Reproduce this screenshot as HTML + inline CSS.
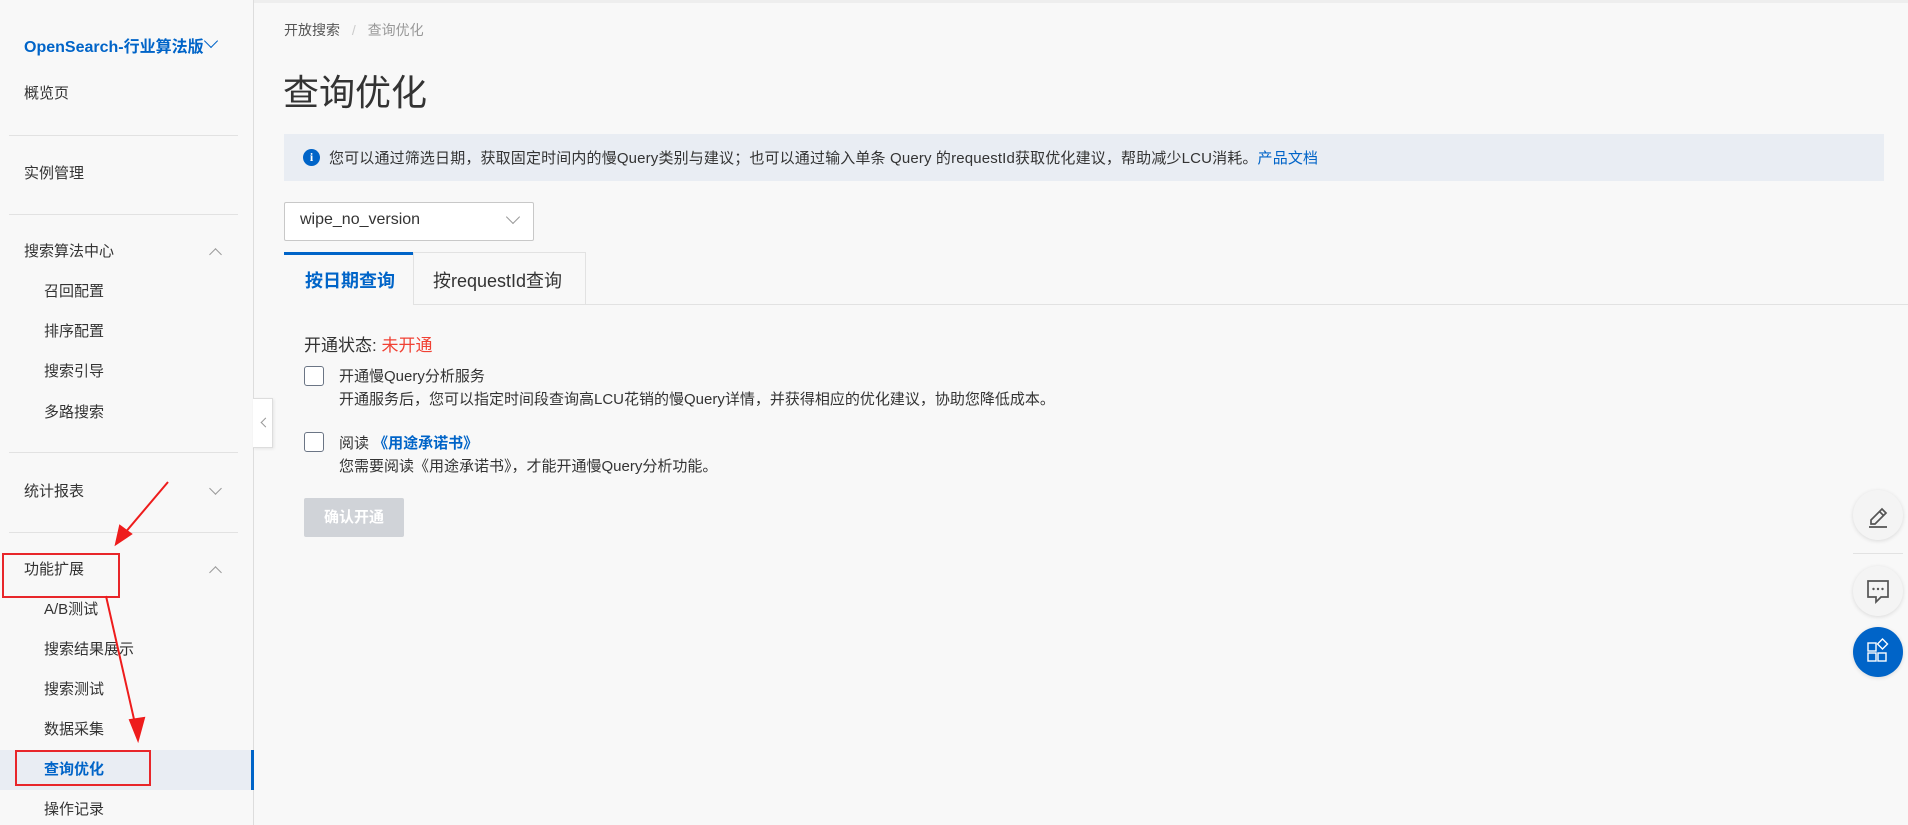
<!DOCTYPE html>
<html><head><meta charset="utf-8"><style>
*{margin:0;padding:0;box-sizing:border-box}
body{width:1908px;height:825px;overflow:hidden;background:#f8f8f8;font-family:"Liberation Sans","Noto Sans CJK SC",sans-serif;color:#333;position:relative}
.a{position:absolute;white-space:nowrap}
.side{position:absolute;left:0;top:0;width:254px;height:825px;border-right:1px solid #ddd;background:#f8f8f8}
.si{font-size:15px;color:#333;line-height:20px}
.hr{position:absolute;left:9px;width:229px;height:1px;background:#e2e2e2}
.chev{position:absolute;width:9px;height:9px;border-left:1.5px solid #999;border-top:1.5px solid #999}
.cb{position:absolute;width:20px;height:20px;border:1.5px solid #6b7585;border-radius:3px;background:#fff}
.fb{position:absolute;width:50px;height:50px;border-radius:50%;background:#f4f4f4;box-shadow:0 1px 4px rgba(0,0,0,.12)}
</style></head><body>
<div class="a" style="left:0;top:0;width:1908px;height:3px;background:#eee"></div>
<div class="a" style="left:0;top:0;width:57px;height:2px;background:#ff6a00"></div>
<div class="side">
<div class="a" style="left:24px;top:33px;font-size:16px;font-weight:bold;color:#0064c8">OpenSearch-行业算法版</div>
<div class="chev" style="left:206px;top:36px;transform:rotate(-135deg);border-color:#0064c8;width:10px;height:10px"></div>
<div class="a si" style="left:24px;top:84px">概览页</div>
<div class="hr" style="top:135px"></div>
<div class="a si" style="left:24px;top:164px">实例管理</div>
<div class="hr" style="top:214px"></div>
<div class="a si" style="left:24px;top:242px">搜索算法中心</div>
<div class="chev" style="left:211px;top:250px;transform:rotate(45deg)"></div>
<div class="a si" style="left:44px;top:282px">召回配置</div>
<div class="a si" style="left:44px;top:322px">排序配置</div>
<div class="a si" style="left:44px;top:362px">搜索引导</div>
<div class="a si" style="left:44px;top:403px">多路搜索</div>
<div class="hr" style="top:452px"></div>
<div class="a si" style="left:24px;top:482px">统计报表</div>
<div class="chev" style="left:211px;top:484px;transform:rotate(-135deg)"></div>
<div class="hr" style="top:532px"></div>
<div class="a si" style="left:24px;top:560px">功能扩展</div>
<div class="chev" style="left:211px;top:568px;transform:rotate(45deg)"></div>
<div class="a si" style="left:44px;top:600px">A/B测试</div>
<div class="a si" style="left:44px;top:640px">搜索结果展示</div>
<div class="a si" style="left:44px;top:680px">搜索测试</div>
<div class="a si" style="left:44px;top:720px">数据采集</div>
<div class="a" style="left:0;top:750px;width:254px;height:40px;background:#e9edf3;border-right:3px solid #0064c8"></div>
<div class="a si" style="left:44px;top:760px;color:#0064c8;font-weight:bold">查询优化</div>
<div class="a si" style="left:44px;top:800px">操作记录</div>
</div>
<div class="a" style="left:2px;top:553px;width:118px;height:45px;border:2px solid #e8262a"></div>
<div class="a" style="left:15px;top:750px;width:136px;height:36px;border:2px solid #e8262a"></div>
<svg class="a" style="left:0;top:0" width="260" height="825">
<g stroke="#ee1c1c" stroke-width="2" fill="#ee1c1c">
<line x1="168" y1="482" x2="124" y2="534"/><polygon points="116,544 120,526 131,534"/>
<line x1="106" y1="596" x2="136" y2="728"/><polygon points="138,740 130,720 144,718"/>
</g></svg>
<div class="a" style="left:253px;top:398px;width:20px;height:50px;background:#fff;border:1px solid #ddd;border-left:none;box-shadow:1px 1px 3px rgba(0,0,0,.08)"></div>
<div class="chev" style="left:262px;top:419px;transform:rotate(-45deg);width:7px;height:7px"></div>
<div class="a" style="left:284px;top:20px;font-size:14px;color:#555">开放搜索 <span style="color:#ccc;margin:0 8px">/</span> <span style="color:#999">查询优化</span></div>
<div class="a" style="left:283px;top:64px;font-size:36px;color:#333">查询优化</div>
<div class="a" style="left:284px;top:134px;width:1600px;height:47px;background:#e9edf3"></div>
<div class="a" style="left:303px;top:149px;width:17px;height:17px;border-radius:50%;background:#0064c8;color:#fff;font-size:12px;font-weight:bold;text-align:center;line-height:17px;font-family:'Liberation Serif',serif">i</div>
<div class="a" style="left:329px;top:147px;font-size:15px;color:#333;letter-spacing:0.15px">您可以通过筛选日期，获取固定时间内的慢Query类别与建议；也可以通过输入单条 Query 的requestId获取优化建议，帮助减少LCU消耗。<span style="color:#0064c8">产品文档</span></div>
<div class="a" style="left:284px;top:202px;width:250px;height:39px;background:#fff;border:1px solid #c8c8c8;border-radius:2px"></div>
<div class="a" style="left:300px;top:211px;font-size:16px;color:#333">wipe_no_version</div>
<div class="chev" style="left:508px;top:212px;transform:rotate(-135deg);width:10px;height:10px"></div>
<div class="a" style="left:284px;top:304px;width:1624px;height:1px;background:#e2e2e2"></div>
<div class="a" style="left:284px;top:252px;width:129px;height:53px;background:#f8f8f8;border-top:3px solid #0064c8"></div>
<div class="a" style="left:305px;top:267px;font-size:18px;font-weight:bold;color:#0064c8">按日期查询</div>
<div class="a" style="left:413px;top:252px;width:173px;height:52px;border:1px solid #e2e2e2;border-bottom:none;background:#f8f8f8"></div>
<div class="a" style="left:433px;top:267px;font-size:18px;color:#333">按requestId查询</div>
<div class="a" style="left:304px;top:331px;font-size:17px;color:#333">开通状态: <span style="color:#f04134">未开通</span></div>
<div class="cb" style="left:304px;top:366px"></div>
<div class="a" style="left:339px;top:365px;font-size:15px">开通慢Query分析服务</div>
<div class="a" style="left:339px;top:388px;font-size:15px">开通服务后，您可以指定时间段查询高LCU花销的慢Query详情，并获得相应的优化建议，协助您降低成本。</div>
<div class="cb" style="left:304px;top:432px"></div>
<div class="a" style="left:339px;top:432px;font-size:15px">阅读 <span style="color:#0064c8;font-weight:bold">《用途承诺书》</span></div>
<div class="a" style="left:339px;top:455px;font-size:15px">您需要阅读《用途承诺书》，才能开通慢Query分析功能。</div>
<div class="a" style="left:304px;top:498px;width:100px;height:39px;background:#d0d3d8;border-radius:2px;color:#fff;font-size:15px;font-weight:bold;text-align:center;line-height:39px">确认开通</div>
<div class="fb" style="left:1853px;top:490px"><svg width="50" height="50"><g fill="none" stroke="#555" stroke-width="1.7"><path d="M18 30 L29 19 L33 23 L22 34 L18 34 Z"/><line x1="26.5" y1="21.5" x2="30.5" y2="25.5"/><line x1="16" y1="37" x2="34" y2="37"/></g></svg></div>
<div class="a" style="left:1853px;top:553px;width:50px;height:1px;background:#e2e2e2"></div>
<div class="fb" style="left:1853px;top:566px"><svg width="50" height="50"><g fill="none" stroke="#555" stroke-width="1.7"><path d="M15 15 H35 V31 H28 L23 36 V31 H15 Z"/></g><g fill="#555"><circle cx="20.5" cy="23" r="1.2"/><circle cx="25" cy="23" r="1.2"/><circle cx="29.5" cy="23" r="1.2"/></g></svg></div>
<div class="fb" style="left:1853px;top:627px;background:#0064c8"><svg width="50" height="50"><g fill="none" stroke="#fff" stroke-width="1.4"><rect x="15" y="16" width="8" height="8"/><rect x="15" y="26" width="8" height="8"/><rect x="25" y="26" width="8" height="8"/><path d="M29.5 12 L34.5 17 L29.5 22 L24.5 17 Z"/></g></svg></div>
</body></html>
